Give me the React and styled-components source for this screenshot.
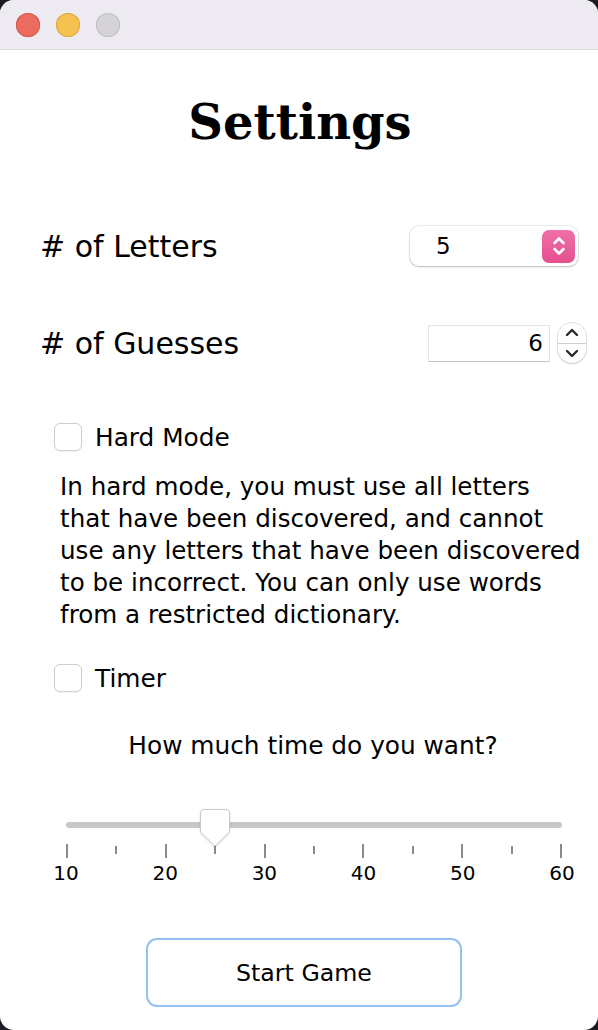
import React from 'react';
import styled, { createGlobalStyle } from 'styled-components';

const GlobalStyle = createGlobalStyle`
  html, body {
    margin: 0;
    padding: 0;
    background: #1d1c22;
  }
  body {
    font-family: 'DejaVu Sans', 'Liberation Sans', sans-serif;
    color: #000;
  }
`;

const Window = styled.div`
  width: 598px;
  height: 1030px;
  background: #fff;
  border-radius: 14px;
  overflow: hidden;
  display: flex;
  flex-direction: column;
`;

const TitleBar = styled.div`
  height: 50px;
  flex: none;
  background: #edebf1;
  border-bottom: 1px solid #d9d8dc;
  box-sizing: border-box;
  display: flex;
  align-items: center;
  gap: 16px;
  padding: 0 0 0 16px;
`;

const Light = styled.span`
  width: 24px;
  height: 24px;
  border-radius: 50%;
  background: ${(p) => p.color};
  box-shadow: inset 0 0 0 1px ${(p) => p.edge};
`;

const Content = styled.div`
  flex: 1;
  display: flex;
  flex-direction: column;
`;

const Title = styled.h1`
  margin: 37px 0 0 2px;
  height: 70px;
  line-height: 70px;
  text-align: center;
  font-family: 'DejaVu Serif', 'Liberation Serif', serif;
  font-weight: bold;
  font-size: 48px;
`;

const Row = styled.div`
  display: flex;
  align-items: center;
  justify-content: space-between;
  height: 50px;
  padding: 0 ${(p) => p.right}px 0 40px;
  margin-top: ${(p) => p.top}px;
`;

const Label = styled.span`
  font-size: 30px;
`;

const Select = styled.div`
  width: 168px;
  height: 40px;
  box-sizing: border-box;
  border-radius: 9px;
  background: #fff;
  box-shadow: 0 0 0 1px rgba(0, 0, 0, 0.08), 0 1px 2px rgba(0, 0, 0, 0.2);
  display: flex;
  align-items: center;
  justify-content: space-between;
  padding: 0 3px 0 26px;
  font-size: 23px;
`;

const PinkStep = styled.span`
  width: 33px;
  height: 33px;
  border-radius: 7px;
  background: linear-gradient(#f06fa9, #e5508f);
  display: flex;
  align-items: center;
  justify-content: center;
`;

const SpinGroup = styled.div`
  display: flex;
  align-items: center;
  gap: 8px;
`;

const NumberField = styled.div`
  width: 122px;
  height: 37px;
  box-sizing: border-box;
  border: 1px solid #e3e3e3;
  border-bottom-color: #c4c4c4;
  display: flex;
  align-items: center;
  justify-content: flex-end;
  padding-right: 6px;
  font-size: 23px;
`;

const Spinner = styled.div`
  width: 28px;
  height: 40px;
  border-radius: 14px;
  background: #fff;
  box-shadow: 0 0 0 1px rgba(0, 0, 0, 0.1), 0 1px 2px rgba(0, 0, 0, 0.15);
  display: flex;
  flex-direction: column;
`;

const SpinHalf = styled.span`
  flex: 1;
  display: flex;
  align-items: center;
  justify-content: center;
  border-top: ${(p) => (p.lower ? '1.5px solid #d0d0d0' : 'none')};
`;

const CheckRow = styled.label`
  display: flex;
  align-items: center;
  gap: 13px;
  padding-left: 54px;
  margin-top: ${(p) => p.top}px;
  height: 30px;
  font-size: 24.8px;
`;

const Box = styled.span`
  width: 28px;
  height: 28px;
  box-sizing: border-box;
  border-radius: 6px;
  border: 1px solid #cfcfcf;
  background: #fff;
  box-shadow: 0 1px 1px rgba(0, 0, 0, 0.05);
`;

const Description = styled.div`
  margin: 19px 0 0 60px;
  font-size: 24.6px;
  line-height: 32px;
`;

const Line = styled.div`
  white-space: nowrap;
`;

const Question = styled.div`
  margin-top: 38px;
  text-align: center;
  padding-left: 28px;
  font-size: 24.8px;
  line-height: 30px;
`;

const SliderBox = styled.div`
  margin: 49px 0 0 46px;
  width: 536px;
  display: flex;
  flex-direction: column;
`;

const TrackWrap = styled.div`
  position: relative;
  height: 30px;
  margin: 0 20px;
  display: flex;
  align-items: center;
`;

const Track = styled.div`
  flex: 1;
  height: 6px;
  border-radius: 3px;
  background: #c7c7c7;
`;

const Thumb = styled.svg`
  position: absolute;
  top: -2px;
  left: ${(p) => p.pos}%;
  margin-left: -16px;
  filter: drop-shadow(0 1px 1px rgba(0, 0, 0, 0.12));
`;

const Ticks = styled.div`
  margin: 4px 20px 0;
  height: 14px;
  display: flex;
  justify-content: space-between;
  align-items: flex-start;
`;

const Tick = styled.span`
  width: 2px;
  height: ${(p) => (p.major ? 14 : 8)}px;
  margin-top: ${(p) => (p.major ? 0 : 2)}px;
  background: #8a8a8a;
`;

const TickLabels = styled.div`
  display: flex;
  justify-content: space-between;
  margin-top: 3px;
`;

const TickLabel = styled.span`
  width: 40px;
  text-align: center;
  font-size: 20px;
  line-height: 24px;
`;

const Footer = styled.div`
  display: flex;
  justify-content: center;
  margin-top: 53px;
  padding-left: 10px;
`;

const StartButton = styled.button`
  width: 316px;
  height: 69px;
  border-radius: 11px;
  border: 2px solid #93c1f2;
  background: #fff;
  font-family: inherit;
  font-size: 23.7px;
  color: #000;
`;

const Chevron = ({ up, color }) => (
  <svg width="14" height="9" viewBox="0 0 14 9">
    <path
      d={up ? 'M2 7 L7 2 L12 7' : 'M2 2 L7 7 L12 2'}
      fill="none"
      stroke={color}
      strokeWidth="2.4"
      strokeLinecap="round"
      strokeLinejoin="round"
    />
  </svg>
);

const App = () => {
  const ticks = Array.from({ length: 11 }, (_, i) => i);
  const labels = [10, 20, 30, 40, 50, 60];
  const value = 25;
  const pos = ((value - 10) / 50) * 100;

  return (
    <>
      <GlobalStyle />
      <Window>
        <TitleBar>
          <Light color="#ec6a5e" edge="#d2574c" />
          <Light color="#f5c150" edge="#dca83e" />
          <Light color="#d5d3d8" edge="#c0bec4" />
        </TitleBar>
        <Content>
          <Title>Settings</Title>

          <Row top={64} right={20}>
            <Label># of Letters</Label>
            <Select>
              <span>5</span>
              <PinkStep>
                <svg width="16" height="24" viewBox="0 0 16 24">
                  <path d="M3.5 9 L8 4.5 L12.5 9 M3.5 15 L8 19.5 L12.5 15" fill="none" stroke="#fff" strokeWidth="2.6" strokeLinecap="round" strokeLinejoin="round" />
                </svg>
              </PinkStep>
            </Select>
          </Row>

          <Row top={47} right={12}>
            <Label># of Guesses</Label>
            <SpinGroup>
              <NumberField>6</NumberField>
              <Spinner>
                <SpinHalf>
                  <Chevron up color="#2b2b2b" />
                </SpinHalf>
                <SpinHalf lower>
                  <Chevron color="#2b2b2b" />
                </SpinHalf>
              </Spinner>
            </SpinGroup>
          </Row>

          <CheckRow top={54}>
            <Box />
            Hard Mode
          </CheckRow>

          <Description>
            <Line>In hard mode, you must use all letters</Line>
            <Line>that have been discovered, and cannot</Line>
            <Line>use any letters that have been discovered</Line>
            <Line>to be incorrect. You can only use words</Line>
            <Line>from a restricted dictionary.</Line>
          </Description>

          <CheckRow top={32}>
            <Box />
            Timer
          </CheckRow>

          <Question>How much time do you want?</Question>

          <SliderBox>
            <TrackWrap>
              <Track />
              <Thumb pos={pos} width="32" height="42" viewBox="0 0 32 42">
                <path
                  d="M5 1.5 H27 A3.5 3.5 0 0 1 30.5 5 V24 L16 38 L1.5 24 V5 A3.5 3.5 0 0 1 5 1.5 Z"
                  fill="#fff"
                  stroke="#c9c9c9"
                  strokeWidth="1"
                />
              </Thumb>
            </TrackWrap>
            <Ticks>
              {ticks.map((i) => (
                <Tick key={i} major={i % 2 === 0} />
              ))}
            </Ticks>
            <TickLabels>
              {labels.map((l) => (
                <TickLabel key={l}>{l}</TickLabel>
              ))}
            </TickLabels>
          </SliderBox>

          <Footer>
            <StartButton>Start Game</StartButton>
          </Footer>
        </Content>
      </Window>
    </>
  );
};

export default App;
